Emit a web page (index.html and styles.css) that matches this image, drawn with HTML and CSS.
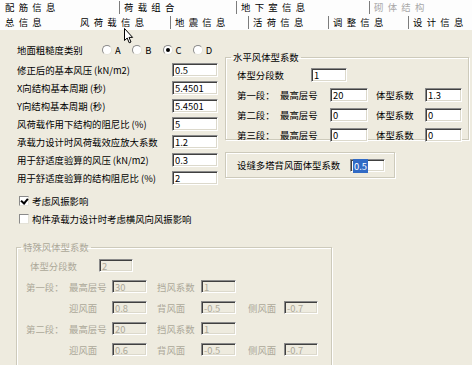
FILE: index.html
```html
<!DOCTYPE html>
<html>
<head>
<meta charset="utf-8">
<link rel="stylesheet" href="styles.css">
</head>
<body>
<div class="tabs">
  <div class="tabrow">
    <div class="tab w119">配筋信息</div>
    <div class="tab sep w117">荷载组合</div>
    <div class="tab sep w133">地下室信息</div>
    <div class="tab sep grow dis">砌体结构</div>
  </div>
  <div class="tabrow">
    <div class="tab w75">总信息</div>
    <div class="tab w95">风荷载信息</div>
    <div class="tab sep w78">地震信息</div>
    <div class="tab sep w80">活荷信息</div>
    <div class="tab sep w80">调整信息</div>
    <div class="tab sep grow">设计信息</div>
  </div>
</div>

<div class="panel">
  <div class="top">
    <div class="left">
      <div class="row first">
        <span>地面粗糙度类别</span>
        <div class="radios">
          <span class="radio"><i class="rb"></i>A</span>
          <span class="radio"><i class="rb"></i>B</span>
          <span class="radio"><i class="rb on"></i>C</span>
          <span class="radio"><i class="rb"></i>D</span>
        </div>
      </div>
      <div class="row"><span>修正后的基本风压 (kN/m2)</span><span class="inp w46">0.5</span></div>
      <div class="row"><span>X向结构基本周期 (秒)</span><span class="inp w46">5.4501</span></div>
      <div class="row"><span>Y向结构基本周期 (秒)</span><span class="inp w46">5.4501</span></div>
      <div class="row"><span>风荷载作用下结构的阻尼比 (%)</span><span class="inp w46">5</span></div>
      <div class="row"><span>承载力设计时风荷载效应放大系数</span><span class="inp w46">1.2</span></div>
      <div class="row"><span>用于舒适度验算的风压 (kN/m2)</span><span class="inp w46">0.3</span></div>
      <div class="row"><span>用于舒适度验算的结构阻尼比 (%)</span><span class="inp w46">2</span></div>
      <div class="check c1"><i class="cb on"></i>考虑风振影响</div>
      <div class="check"><i class="cb"></i>构件承载力设计时考虑横风向风振影响</div>
    </div>
    <div class="right">
      <fieldset class="grp g1">
        <legend>水平风体型系数</legend>
        <div class="grow-rows">
          <div class="grow-row"><span class="l74">体型分段数</span><span class="inp w36">1</span></div>
          <div class="grow-row"><span class="l43">第一段：</span><span class="l50">最高层号</span><span class="inp w38">20</span><span class="l49">体型系数</span><span class="inp w37">1.3</span></div>
          <div class="grow-row"><span class="l43">第二段：</span><span class="l50">最高层号</span><span class="inp w38">0</span><span class="l49">体型系数</span><span class="inp w37">0</span></div>
          <div class="grow-row"><span class="l43">第三段：</span><span class="l50">最高层号</span><span class="inp w38">0</span><span class="l49">体型系数</span><span class="inp w37">0</span></div>
        </div>
      </fieldset>
      <div class="grp g2">
        <span class="l113">设缝多塔背风面体型系数</span><span class="inp w35"><b class="sel">0.5</b></span>
      </div>
    </div>
  </div>

  <fieldset class="grp special">
    <legend>特殊风体型系数</legend>
    <div class="srows">
      <div class="srow s1"><span class="l69">体型分段数</span><span class="inp dinp w34">2</span></div>
      <div class="srow"><span class="c43">第一段：</span><span class="c43">最高层号</span><span class="inp dinp w35">30</span><span class="c44">挡风系数</span><span class="inp dinp w35">1</span></div>
      <div class="srow"><span class="c43"></span><span class="c43">迎风面</span><span class="inp dinp w35">0.8</span><span class="c44">背风面</span><span class="inp dinp w35">-0.5</span><span class="c36">侧风面</span><span class="inp dinp w34">-0.7</span></div>
      <div class="srow"><span class="c43">第二段：</span><span class="c43">最高层号</span><span class="inp dinp w35">20</span><span class="c44">挡风系数</span><span class="inp dinp w35">1</span></div>
      <div class="srow"><span class="c43"></span><span class="c43">迎风面</span><span class="inp dinp w35">0.6</span><span class="c44">背风面</span><span class="inp dinp w35">-0.5</span><span class="c36">侧风面</span><span class="inp dinp w34">-0.7</span></div>
    </div>
  </fieldset>
</div>

<svg class="cursor" width="10" height="16" viewBox="0 0 10 16">
  <path d="M0.5 0.5 L0.5 12.5 L3.2 10 L5.2 14.8 L7 14 L5 9.4 L8.6 9.4 Z" fill="#fff" stroke="#000" stroke-width="1" stroke-linejoin="miter"/>
</svg>
</body>
</html>
```

FILE: styles.css
```css
* { box-sizing: border-box; }
body {
  margin: 0;
  width: 472px;
  height: 365px;
  overflow: hidden;
  position: relative;
  background: #eeebdf;
  font-family: "Noto Sans CJK SC", "Liberation Sans", sans-serif;
  font-size: 9.4px;
  color: #000;
}

/* tabs */
.tabs { background: #fdfdfd; }
.tabrow {
  display: flex;
  height: 15px;
  line-height: 13px;
  letter-spacing: 4.3px;
}
.tab {
  padding-left: 5px;
  margin: 1px 0;
  white-space: nowrap;
}
.tab.sep { border-left: 1px solid #7c7c7c; padding-left: 4px; }
.tab.dis { color: #a8a8a8; }
.w119 { width: 119px; }
.w117 { width: 117px; }
.w133 { width: 133px; }
.w75 { width: 75px; }
.w95 { width: 95px; }
.w78 { width: 78px; }
.w80 { width: 80px; }
.grow { flex: 1; }

/* panel */
.panel { padding-top: 13px; }
.top { display: flex; margin-left: 17px; gap: 7px; }
.left { width: 201px; }
.row {
  display: flex;
  align-items: center;
  justify-content: space-between;
  height: 18px;
}
.row.first { height: 14px; margin-bottom: 4px; }
.radios { display: flex; width: 121px; margin-right: -5px; }
.radio { display: flex; align-items: center; width: 31px; }
.rb {
  width: 10px; height: 10px;
  border-radius: 50%;
  background: #fff;
  border: 1px solid #8a8a8a;
  border-right-color: #e4e2d8;
  border-bottom-color: #e4e2d8;
  margin-right: 3px;
  position: relative;
}
.rb.on::after {
  content: "";
  position: absolute;
  left: 2px; top: 2px;
  width: 4px; height: 4px;
  border-radius: 50%;
  background: #000;
}

.inp {
  display: block;
  height: 14px;
  background: #fff;
  border-top: 1px solid #8a8a8a;
  border-left: 1px solid #8a8a8a;
  border-right: 1px solid #fff;
  border-bottom: 1px solid #fff;
  box-shadow: inset 1px 1px 0 #404040, inset -1px -1px 0 #dcd9cc;
  padding-left: 2px;
  line-height: 12px;
  white-space: nowrap;
  flex: none;
}
.w46 { width: 46px; }
.w36 { width: 36px; }
.w38 { width: 38px; }
.w37 { width: 37px; }
.w35 { width: 35px; }
.w34 { width: 34px; }
.sel { font-weight: normal; background: #316ac5; color: #fff; padding: 0 1px; }

.check {
  display: flex;
  align-items: center;
  height: 14px;
  margin-top: 4px;
  padding-left: 2px;
}
.check.c1 { margin-top: 7px; }
.cb {
  width: 10px; height: 10px;
  background: #fff;
  border: 1px solid #8a8a8a;
  border-right-color: #e4e2d8;
  border-bottom-color: #e4e2d8;
  margin-right: 3px;
  position: relative;
}
.cb.on::after {
  content: "";
  position: absolute;
  left: 2px; top: 0px;
  width: 3px; height: 5px;
  border-right: 2px solid #000;
  border-bottom: 2px solid #000;
  transform: rotate(40deg);
}

/* group boxes */
.grp {
  border: 1px solid #cdcabb;
  box-shadow: 1px 1px 0 #fff, inset 1px 1px 0 #fff;
  margin: 0;
  padding: 0;
  min-width: 0;
}
.grp legend {
  padding: 0 2px;
  margin-left: 5px;
  line-height: 12px;
}
.right { width: 244px; padding-top: 8px; }
.g1 { width: 244px; height: 89px; }
.grow-rows { padding-left: 11px; margin-top: 2px; }
.grow-row { display: flex; align-items: center; height: 20px; }
.l74 { width: 74px; }
.l43 { width: 43px; }
.l50 { width: 50px; }
.l49 { width: 49px; margin-left: 8px; }
.grow-row .inp { height: 14px; }

.g2 {
  width: 170px;
  height: 26px;
  margin-top: 12px;
  display: flex;
  align-items: center;
  padding-left: 11px;
}
.l113 { width: 113px; }
.g2 .inp { height: 13px; }

/* special (disabled) */
.special {
  margin-left: 16px;
  margin-top: 15px;
  width: 316px;
  height: 140px;
  color: #aca899;
}
.special legend { margin-left: 4px; }
.srows { margin-top: 2px; }
.srow { display: flex; align-items: center; height: 21px; padding-left: 9px; }
.srow.s1 { padding-left: 13px; }
.l69 { width: 69px; }
.c43 { width: 43px; flex: none; }
.c44 { width: 44px; flex: none; margin-left: 10px; }
.c36 { width: 36px; flex: none; margin-left: 12px; }
.dinp {
  background: #eeebdf;
  color: #aca899;
  height: 13px;
}

.cursor { position: absolute; left: 124px; top: 28px; }
```
